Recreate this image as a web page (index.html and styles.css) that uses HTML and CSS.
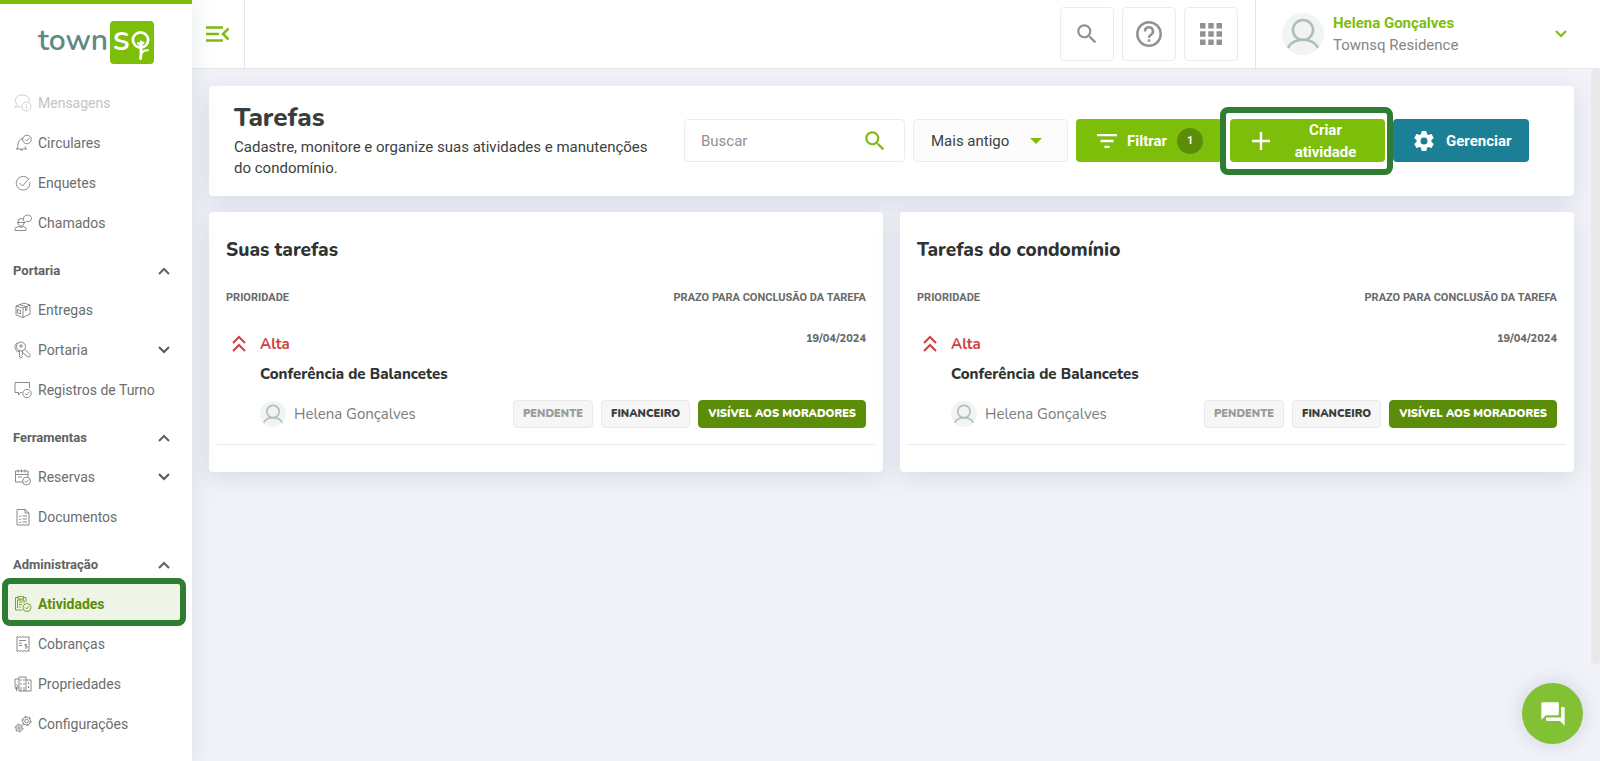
FILE: index.html
```html
<!DOCTYPE html>
<html lang="pt-BR">
<head>
<meta charset="utf-8">
<title>TownSq - Tarefas</title>
<meta name="viewport" content="width=device-width, initial-scale=1">
<link rel="stylesheet" href="styles.css">
</head>
<body>
<svg class="defs" aria-hidden="true">
  <symbol id="search" viewBox="0 0 24 24"><path fill="currentColor" d="M15.5 14h-.79l-.28-.27A6.47 6.47 0 0 0 16 9.500 6.500 6.500 0 1 0 9.500 16c1.610 0 3.090-.59 4.230-1.570l.27.28v.79l5 4.990L20.490 19zm-6 0a4.500 4.500 0 1 1 0-9 4.500 4.500 0 0 1 0 9z"/></symbol>
  <symbol id="up" viewBox="0 0 12 8"><path fill="none" stroke="currentColor" stroke-width="2" d="M1 7l5-5 5 5"/></symbol>
  <symbol id="down" viewBox="0 0 12 8"><path fill="none" stroke="currentColor" stroke-width="2" d="M1 1l5 5 5-5"/></symbol>
  <symbol id="double-up" viewBox="0 0 14 18"><path fill="none" stroke="currentColor" stroke-width="2" d="M1 8l6-6 6 6M1 16l6-6 6 6"/></symbol>
  <symbol id="person" viewBox="0 0 42 42"><circle cx="21" cy="21" r="21" fill="#f2f3f3"/><g fill="none" stroke="#aebfba" stroke-width="2.600" stroke-linecap="round"><circle cx="21" cy="17" r="10"/><path d="M6.500 34c3-5 8-7.200 14.500-7.200S32.500 29 35.500 34"/></g></symbol>
</svg>
<div class="app">
  <aside class="sidebar">
    <a class="logo" href="#" aria-label="townSq">
      <svg width="118" height="52" viewBox="0 0 118 52" aria-hidden="true">
        <text class="logo-town" x="1" y="37">town</text>
        <rect x="73" y="8" width="44" height="43" rx="4" fill="#7dbe0a"/>
        <text class="logo-s" x="76" y="37">S</text>
        <g fill="none" stroke="#fff" stroke-width="2.800" stroke-linecap="round"><circle cx="103.500" cy="27" r="7.600"/><path d="M104 29v8q.3 4-.5 8.500"/><path stroke-width="2" d="M104.500 41q1-4 6.500-3.800M104 33l-3-3M104 32l2.500-2.500"/></g>
      </svg>
    </a>
    <nav class="nav" aria-label="Menu principal">
      <a class="item faded" href="#"><svg class="ico" viewBox="0 0 18 18"><path d="M3 10.500C-.5 6 2 1 8 1s8.500 4 7 7M3 10.500L1 13.500l4-1q1.500.7 3 .7"/><circle cx="12.500" cy="12.500" r="4.500"/><path d="M12.500 12v3M12.500 10v.8"/></svg>Mensagens</a>
      <a class="item" href="#"><svg class="ico" viewBox="0 0 18 18"><path d="M2 15h11M3 15c1-1.500.7-3 1-5 .4-3 2-4.500 4-5M12 15c-.8-1-.8-2-.8-3M6.500 15q.5 2 2 1.500M8 5V3.500"/><circle cx="13" cy="5.500" r="4.300"/><path d="M11 5.500l1.500 1.500L15.500 4"/></svg>Circulares</a>
      <a class="item" href="#"><svg class="ico" viewBox="0 0 18 18"><path d="M14 4.500A6.800 6.800 0 1 0 15.800 8M5.500 9l3 3L15.500 4"/></svg>Enquetes</a>
      <a class="item" href="#"><svg class="ico" viewBox="0 0 18 18"><path d="M1 16.500v-2c1-1.500 3-1.500 4-2 1.500 1 2.500 1 4 0 1 .5 3 .5 3 2v2zM4 8.500c0 5 6 5 6 0M3 8.500h8M4 8q0-3.500 3-3.500t3 3M9.500 5c-.5-5 8-5 8-.8 0 3-3 4-5 3.200L10.500 9"/></svg>Chamados</a>

      <button class="group" type="button">Portaria<svg class="chev"><use href="#up"/></svg></button>
      <a class="item" href="#"><svg class="ico" viewBox="0 0 18 18"><path d="M2 5l8-3 6 2-7 3zM2 5v9l7 2.500V7M16 4v9l-7 3.500M6 3.700l7 2.200v3l-1.500.8V6.500M3.500 8.500l3 .8v3.500l-3-.8z"/></svg>Entregas</a>
      <a class="item" href="#"><svg class="ico" viewBox="0 0 18 18"><circle cx="7" cy="5.500" r="4.500"/><path d="M5.500 9.500V16l1.500 1 1.500-1.500-1-1 1-1V9.500M6 4h2v2H6zM10.500 8l5.500 5.500-.3 2.300-2.200.2-1.500-2-1.500-.5L9 11.500M4 2C-.5 3 1 8 2.500 9.500l1 1.500 2-1.500"/></svg>Portaria<svg class="chev"><use href="#down"/></svg></a>
      <a class="item" href="#"><svg class="ico" viewBox="0 0 18 18"><path d="M8 11.500H6.500L4.500 14v-2.500H1v-10h14.500V7"/><circle cx="13" cy="12.500" r="4.200"/><path d="M11 12.500l1.500 1.500 2.500-2.800"/></svg>Registros de Turno</a>

      <button class="group" type="button">Ferramentas<svg class="chev"><use href="#up"/></svg></button>
      <a class="item" href="#"><svg class="ico" viewBox="0 0 18 18"><path d="M9 14H1.500V3H14v6M1.500 6.500H14M4 1.500v3M7.500 1.500v3M11 1.500v3M4 9h4"/><circle cx="12.500" cy="13" r="3.900"/><path d="M10.700 13l1.400 1.400 2.300-2.600"/></svg>Reservas<svg class="chev"><use href="#down"/></svg></a>
      <a class="item" href="#"><svg class="ico" viewBox="0 0 18 18"><path d="M3 1.500h8l4 3.500v12H3zM11 1.500V5h4M5 8l.8.8L7 7.500M5 11l.8.8L7 10.500M5 14l.8.800L7 13.500M8.500 8H13M8.500 11H13M8.500 14H13"/></svg>Documentos</a>

      <button class="group" type="button">Administração<svg class="chev"><use href="#up"/></svg></button>
      <a class="item active" href="#" aria-current="page"><svg class="ico" viewBox="0 0 18 18"><path d="M8.500 15H1.500V2.500H4M9.500 2.500h2.500V7M4 1.500h5.500v2.500H4zM3.500 13V5h6.500v3M5 7h3.500M5 9.500h3M5 12h2"/><circle cx="13" cy="12.500" r="4"/><path d="M11 12.500l1.500 1.500 2.500-2.800"/></svg>Atividades</a>
      <a class="item" href="#"><svg class="ico" viewBox="0 0 18 18"><path d="M3 1.500l1.500 1L6 1.500l1.500 1L9 1.500l1.500 1 1.500-1 1.500 1 1.500-1v15l-1.500-1-1.500 1-1.500-1-1.500 1-1.500-1-1.500 1-1.500-1-1.500 1zM5 5.500h7M5 8h3M5 10.500h3M13 9.500h-2V11h2v2h-2.300"/></svg>Cobranças</a>
      <a class="item" href="#"><svg class="ico" viewBox="0 0 18 18"><path d="M5 16V2h7v14M12 5h5v11H4.500M1 10V4h4M2.500 16v-4M1 12a1.500 2 0 1 1 3 0 1.500 2 0 1 1-3 0M7 4v2M10 4v2M7 8v2M10 8v2M7 12v4M10 12v4M14.500 7v2M14.500 11v2"/></svg>Propriedades</a>
      <a class="item" href="#"><svg class="ico" viewBox="0 0 18 18"><circle cx="12.500" cy="6" r="1.800"/><circle cx="12.500" cy="6" r="3.900"/><circle cx="12.500" cy="6" r="4.700" stroke-dasharray="1.900 3"/><circle cx="5" cy="13" r="1.300"/><circle cx="5" cy="13" r="3.200"/><circle cx="5" cy="13" r="4" stroke-dasharray="1.600 2.600"/></svg>Configurações</a>
    </nav>
  </aside>

  <div class="page">
    <header class="topbar">
      <button class="toggle" type="button" aria-label="Recolher menu"><svg width="24" height="16" viewBox="0 0 24 16"><path fill="none" stroke="currentColor" stroke-width="2.500" d="M0 1.500h17M0 8h13M0 14.500h17M22.500 2.500L17 8l5.500 5.500"/></svg></button>
      <div class="tools">
        <button class="tool" type="button" aria-label="Buscar"><svg width="26" height="26"><use href="#search"/></svg></button>
        <button class="tool" type="button" aria-label="Ajuda"><svg width="26" height="26" viewBox="0 0 26 26" fill="none" stroke="currentColor" stroke-width="2.500"><circle cx="13" cy="13" r="11.700"/><path d="M9 10.500a4 4 0 1 1 6 3.200q-2 1.300-2 3M13 18.200v2.600"/></svg></button>
        <button class="tool" type="button" aria-label="Aplicativos"><svg width="24" height="24" viewBox="0 0 24 24" fill="currentColor"><path d="M1 1h5.500v5.500H1zM9.250 1h5.500v5.500h-5.500zM17.500 1H23v5.500h-5.500zM1 9.250h5.500v5.500H1zM9.250 9.250h5.500v5.500h-5.500zM17.500 9.250H23v5.500h-5.500zM1 17.500h5.500V23H1zM9.250 17.500h5.500V23h-5.500zM17.500 17.500H23V23h-5.500z"/></svg></button>
      </div>
      <button class="account" type="button">
        <svg class="avatar"><use href="#person"/></svg>
        <span class="who"><strong>Helena Gonçalves</strong><span>Townsq Residence</span></span>
        <svg class="chev"><use href="#down"/></svg>
      </button>
    </header>

    <main class="content">
      <section class="card head">
        <div class="intro">
          <h1>Tarefas</h1>
          <p>Cadastre, monitore e organize suas atividades e manutenções do condomínio.</p>
        </div>
        <div class="actions">
          <label class="search"><input type="search" placeholder="Buscar" aria-label="Buscar tarefas"><svg width="26" height="26"><use href="#search"/></svg></label>
          <div class="sort">
            <select aria-label="Ordenar"><option>Mais antigo</option><option>Mais recente</option></select>
            <svg width="12" height="6" viewBox="0 0 12 6"><path fill="#7dbe0a" d="M0 0h12L6 6z"/></svg>
          </div>
          <button class="btn filter" type="button"><svg width="20" height="14" viewBox="0 0 20 14"><path stroke="#fff" stroke-width="2.300" d="M0 1.200h20M3.500 7h13M7.500 12.800h5"/></svg>Filtrar<span class="count">1</span></button>
          <button class="btn create" type="button"><svg width="18" height="18" viewBox="0 0 18 18"><path stroke="#fff" stroke-width="2.400" d="M9 0v18M0 9h18"/></svg><span>Criar atividade</span></button>
          <button class="btn manage" type="button"><svg width="24" height="24" viewBox="0 0 24 24"><path fill="#fff" d="M19.430 12.980c.04-.32.07-.64.07-.98s-.03-.66-.07-.98l2.110-1.650c.19-.15.24-.42.12-.64l-2-3.460c-.12-.22-.39-.3-.61-.22l-2.490 1c-.52-.4-1.080-.73-1.690-.98l-.38-2.650A.49.49 0 0 0 14 2h-4c-.25 0-.46.18-.49.42l-.38 2.650c-.61.25-1.170.59-1.690.98l-2.490-1c-.23-.09-.49 0-.61.22l-2 3.460c-.13.22-.07.49.12.64l2.110 1.650c-.04.32-.07.65-.07.98s.03.66.07.98l-2.110 1.650c-.19.15-.24.42-.12.64l2 3.460c.12.22.39.3.61.22l2.490-1c.52.4 1.080.73 1.690.98l.38 2.650c.03.24.24.42.49.42h4c.25 0 .46-.18.49-.42l.38-2.650c.61-.25 1.170-.59 1.690-.98l2.490 1c.23.09.49 0 .61-.22l2-3.460c.12-.22.07-.49-.12-.64zM12 15.500a3.500 3.500 0 1 1 0-7 3.500 3.500 0 0 1 0 7z"/></svg>Gerenciar</button>
        </div>
      </section>

      <div class="columns">
        <section class="card list">
          <h2>Suas tarefas</h2>
          <div class="cols"><span>PRIORIDADE</span><span>PRAZO PARA CONCLUSÃO DA TAREFA</span></div>
          <article class="task">
            <svg class="prio"><use href="#double-up"/></svg>
            <div class="line"><span class="level">Alta</span><time datetime="2024-04-19">19/04/2024</time></div>
            <h3>Conferência de Balancetes</h3>
            <div class="meta">
              <svg class="mini"><use href="#person"/></svg><span class="owner">Helena Gonçalves</span>
              <span class="chip muted">PENDENTE</span><span class="chip">FINANCEIRO</span><span class="chip solid">VISÍVEL AOS MORADORES</span>
            </div>
          </article>
        </section>
        <section class="card list">
          <h2>Tarefas do condomínio</h2>
          <div class="cols"><span>PRIORIDADE</span><span>PRAZO PARA CONCLUSÃO DA TAREFA</span></div>
          <article class="task">
            <svg class="prio"><use href="#double-up"/></svg>
            <div class="line"><span class="level">Alta</span><time datetime="2024-04-19">19/04/2024</time></div>
            <h3>Conferência de Balancetes</h3>
            <div class="meta">
              <svg class="mini"><use href="#person"/></svg><span class="owner">Helena Gonçalves</span>
              <span class="chip muted">PENDENTE</span><span class="chip">FINANCEIRO</span><span class="chip solid">VISÍVEL AOS MORADORES</span>
            </div>
          </article>
        </section>
      </div>
      <div class="scroll-thumb"></div>
    </main>
  </div>
  <button class="chat" type="button" aria-label="Abrir chat"><svg width="28" height="28" viewBox="0 0 24 24"><path fill="#fff" d="M21 6h-2v9H6v2c0 .55.45 1 1 1h11l4 4V7c0-.55-.45-1-1-1zm-4 6V3c0-.55-.45-1-1-1H3c-.55 0-1 .45-1 1v14l4-4h10c.55 0 1-.45 1-1z"/></svg></button>
</div>
</body>
</html>
```
FILE: styles.css
```css
* { box-sizing: border-box; }

body {
  margin: 0;
  font: 15px/22px Roboto, "Liberation Sans", sans-serif;
  color: #3c3f3e;
  background: #f2f3f8;
}

h1, h2, h3, p { margin: 0; }
button { font: inherit; color: inherit; border: 0; background: none; padding: 0; cursor: pointer; text-align: left; }
a { color: inherit; text-decoration: none; }
svg { flex: none; }
.defs { display: none; }

.app { display: flex; min-height: 100vh; }

/* Sidebar */
.sidebar {
  width: 192px;
  flex: none;
  background: #fff;
  border-top: 4px solid #7dbe0a;
  box-shadow: 0 0 24px rgba(90, 110, 140, .16);
  position: relative;
  z-index: 2;
}
.logo { display: block; height: 79px; padding: 9px 0 0 37px; }
.logo-town { font: 600 30px Nunito, Lato, sans-serif; fill: #5f8985; }
.logo-s { font: 700 26px Nunito, Lato, sans-serif; fill: #fff; }
.nav { display: flex; flex-direction: column; }
.item {
  display: flex;
  align-items: center;
  height: 40px;
  padding: 0 16px 0 14px;
  gap: 6px;
  font-size: 14px;
  color: #6b6e6d;
  position: relative;
}
.item .chev, .group .chev { margin-left: auto; }
.ico { width: 18px; height: 18px; fill: none; stroke: currentColor; stroke-width: .8; }
.chev { width: 12px; height: 8px; }
.item.faded { color: #c3c4c4; }
.item .chev { margin-right: 6px; color: #555958; }
.group {
  display: flex;
  align-items: center;
  height: 39px;
  margin-top: 8px;
  padding: 0 22px 0 13px;
  font-size: 13px;
  font-weight: 700;
  color: #5e6261;
}
.item.active {
  height: 36px;
  margin: 0 12px 4px 8px;
  padding: 4px 8px 0 6px;
  background: #eff5e6;
  color: #5c8d08;
  font-weight: 700;
}
.item.active::after {
  content: "";
  position: absolute;
  inset: -6px;
  border: 6px solid #2e7d32;
  border-radius: 8px;
}

/* Top bar */
.page { flex: 1; min-width: 0; display: flex; flex-direction: column; }
.topbar {
  display: flex;
  height: 69px;
  background: #fff;
  border-bottom: 1px solid #e4e5e8;
}
.toggle {
  width: 53px;
  display: flex;
  align-items: center;
  justify-content: center;
  color: #7dbe0a;
  border-right: 1px solid #e4e5e8;
}
.tools { display: flex; gap: 8px; margin-left: auto; padding: 7px 17px 0 0; }
.tool {
  width: 54px;
  height: 54px;
  display: flex;
  align-items: center;
  justify-content: center;
  border: 1px solid #ececec;
  border-radius: 4px;
  color: #929292;
}
.account {
  display: flex;
  align-items: center;
  gap: 9px;
  width: 345px;
  padding: 0 33px 0 26px;
  border-left: 1px solid #e4e5e8;
}
.account .chev { margin-left: auto; color: #7dbe0a; }
.avatar { width: 42px; height: 42px; }
.who { display: flex; flex-direction: column; color: #848685; }
.who strong { color: #7dbe0a; }

/* Content */
.content { flex: 1; padding: 17px 26px 17px 17px; position: relative; }
.card {
  background: #fff;
  border-radius: 4px;
  box-shadow: 0 6px 24px rgba(90, 110, 140, .18);
}
.head {
  display: flex;
  align-items: center;
  justify-content: space-between;
  min-height: 110px;
  padding: 0 45px 1px 25px;
}
.intro { width: 430px; }
h1, h2, h3, .level, .owner, .chip, time { font-family: Nunito, "Noto Sans", sans-serif; }
h1 { margin-bottom: 4px; font-size: 26px; line-height: 30px; font-weight: 800; color: #3a3d3c; }
.intro p { line-height: 21px; }
.actions { display: flex; gap: 8px; height: 43px; }
.search {
  display: flex;
  align-items: center;
  width: 221px;
  padding: 0 16px;
  border: 1px solid #ececec;
  border-radius: 4px;
  color: #7dbe0a;
}
.search input {
  flex: 1;
  min-width: 0;
  border: 0;
  outline: 0;
  padding: 0;
  font: inherit;
  background: none;
}
.search input::placeholder { color: #8f9190; }
.sort {
  display: flex;
  align-items: center;
  width: 155px;
  padding-right: 25px;
  background: #fcfcfc;
  border: 1px solid #ececec;
  border-radius: 4px;
}
.sort select {
  appearance: none;
  flex: 1;
  min-width: 0;
  border: 0;
  padding: 0 0 0 17px;
  font: inherit;
  color: inherit;
  background: none;
}
.btn {
  display: flex;
  align-items: center;
  border-radius: 4px;
  color: #fff;
  font-weight: 700;
  background: #7dbe0a;
  position: relative;
}
.filter { gap: 10px; width: 146px; padding-left: 21px; }
.count {
  width: 26px;
  height: 26px;
  border-radius: 50%;
  background: #5c8d08;
  font-size: 11px;
  line-height: 26px;
  text-align: center;
}
.create { width: 155px; padding: 0 16px 0 22px; gap: 12px; }
.create span { flex: 1; text-align: center; padding: 0 12px; }
.create::after {
  content: "";
  position: absolute;
  inset: -12px -8px -13px -10px;
  border: 6px solid #2e7d32;
  border-radius: 8px;
}
.manage { gap: 10px; width: 136px; padding-left: 19px; background: #1b7f95; }

.columns { display: grid; grid-template-columns: 1fr 1fr; gap: 17px; margin-top: 16px; }
.list { min-height: 260px; padding: 25px 8px; }
.list h2 { font-size: 19px; line-height: 26px; font-weight: 800; padding: 0 9px; color: #2f3332; }
.cols {
  display: flex;
  justify-content: space-between;
  padding: 24px 9px 0;
  font-size: 11px;
  font-weight: 700;
  color: #686b6a;
}
.task {
  display: grid;
  grid-template-columns: 28px 1fr;
  row-gap: 8px;
  margin-top: 24px;
  padding: 0 9px 16px 15px;
  border-bottom: 1px solid #e8e9ea;
}
.task h3, .task .meta { grid-column: 2; }
.prio { width: 14px; height: 18px; margin-top: 2px; color: #cf3f3f; }
.line { display: flex; justify-content: space-between; }
.level { color: #cf3f3f; font-weight: 700; }
time { font-size: 11px; line-height: 12px; font-weight: 800; color: #686b6a; }
.task h3 { font-size: 15px; font-weight: 800; color: #2f3332; }
.meta { display: flex; align-items: center; gap: 8px; margin-top: 7px; }
.mini { width: 26px; height: 26px; }
.owner { margin-right: auto; color: #7a7d7c; }
.chip {
  padding: 0 9px;
  font-size: 11px;
  line-height: 26px;
  font-weight: 900;
  color: #3a3d3c;
  background: #f6f6f6;
  border: 1px solid #e9e9e9;
  border-radius: 4px;
}
.chip.muted { color: #9a9b9b; }
.chip.solid { color: #fff; background: #5c8d08; border-color: #5c8d08; }

.scroll-thumb {
  position: absolute;
  top: 0;
  right: 0;
  width: 9px;
  height: 86%;
  border-radius: 4px;
  background: #e9e9e9;
}
.chat {
  position: fixed;
  right: 17px;
  bottom: 17px;
  width: 61px;
  height: 61px;
  display: flex;
  align-items: center;
  justify-content: center;
  border-radius: 50%;
  background: #82c034;
  box-shadow: 0 0 20px rgba(90, 110, 140, .25);
  z-index: 3;
}
```
